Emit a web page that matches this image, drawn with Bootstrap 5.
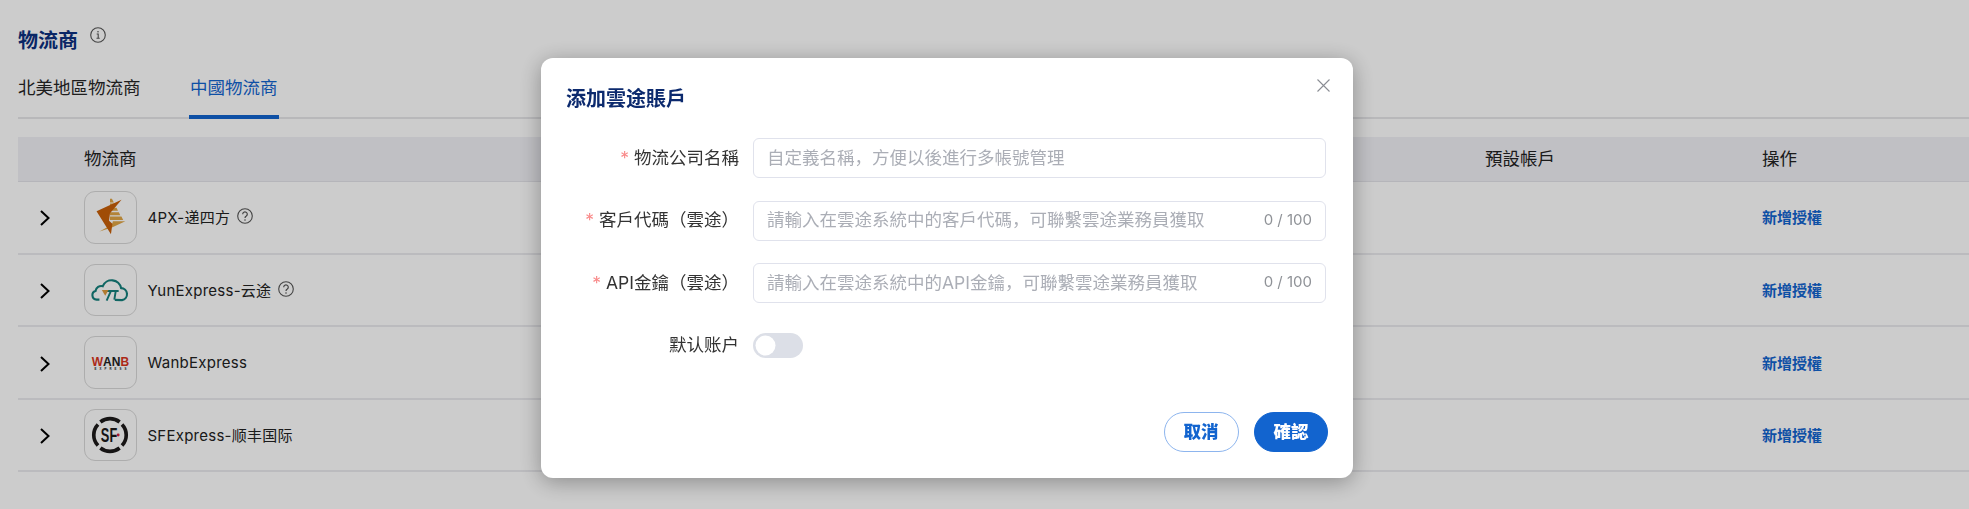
<!DOCTYPE html>
<html lang="zh-Hans">
<head>
<meta charset="utf-8">
<title>物流商</title>
<link href="https://cdn.jsdelivr.net/npm/bootstrap@5.3.0/dist/css/bootstrap.min.css" rel="stylesheet">
<style>
html,body{height:100%;overflow:hidden;background:#fff}
body{font-family:"Inter","Noto Sans CJK SC","Noto Sans CJK TC",sans-serif;font-size:17.5px;color:#222}
.page-wrap{padding:27px 0 0 18px}
.page-title{font-size:20px;font-weight:700;color:#0c3080;line-height:28px;margin:0}
.tab-strip{height:54px;margin-top:10px;border-bottom:2px solid #e6e6e9;gap:48.5px}
.tab-item{height:54px;line-height:46px;font-size:17.5px;color:#262626;text-decoration:none;padding:0;border-bottom:4px solid transparent}
.tab-item.on{color:#1264cf;border-bottom-color:#1264cf;padding:0 1px}
.carrier-table{table-layout:fixed;width:1951px;margin:18px 0 0;--bs-table-bg:transparent}
.carrier-table th{background:#f0f0f5;height:44.4px;padding:0;font-size:17.5px;font-weight:400;color:#222;border-bottom:1px solid #e3e3e9;vertical-align:middle}
.carrier-table td{height:72.5px;padding:0;border-bottom:2px solid #eaeaee;vertical-align:middle}
.chev-cell{padding-left:22px!important}
.logo-box{width:52.5px;height:52.5px;border:1px solid #d9d9d9;border-radius:11px;flex:none}
.carrier-name{font-size:15px;letter-spacing:.25px;color:#222;margin:2px 0 0 3px}
.act-link{display:inline-block;margin-top:2px;font-size:15px;font-weight:600;color:#1264cf;text-decoration:none}
.modal-backdrop{--bs-backdrop-opacity:.2}
.sheet{width:812px;max-width:none;margin:58px 0 0 541px}
.sheet .modal-content{height:420px;border:0;border-radius:12px;box-shadow:0 4px 22px rgba(0,0,0,.32)}
.sheet-head{padding:27px 23px 0 25px;height:80.25px}
.sheet-title{font-size:20px;font-weight:700;color:#0c2a6e;line-height:28px;margin:0}
.sheet-close{margin-top:-6px}
.sheet-body{padding:0 27px 0 0;gap:22.5px}
.field-row{min-height:40px;gap:14px}
.field-label{width:198px;flex:none;text-align:right;color:#333;font-size:17.5px;line-height:24px;padding-bottom:1px}
.req{color:#f98a8a;margin-right:5px;font-family:"Inter",sans-serif}
.field-input{height:40px;border:1.5px solid #e0e2ec;border-radius:6px;padding:0 80px 2px 13px;font-size:17.5px;color:#333}
.field-input::placeholder{color:#abaeb6}
.counter{position:absolute;right:14px;top:48%;transform:translateY(-50%);font-size:15px;color:#8f9297}
.switch-wrap{padding:0;margin:0;min-height:0;line-height:0}
.switch-wrap .form-check-input{width:50px;height:25px;margin:0;float:none;border:0;background-color:#dcdfe7;--bs-form-switch-bg:url("data:image/svg+xml,%3csvg xmlns='http://www.w3.org/2000/svg' viewBox='-4 -4 8 8'%3e%3ccircle r='3.2' fill='%23fff'/%3e%3c/svg%3e")}
.sheet-foot{padding:0 25px 26px 0;gap:15.5px}
.pill-btn{height:40px;padding:0;font-size:17.5px;font-weight:900;line-height:1;border-radius:20px}
.pill-ghost{width:75px;color:#1264cf;border:1px solid #8db5ee;background:#fff}
.pill-solid{width:74px;color:#fff;border:1px solid #1264cf;background:#1264cf}
</style>
</head>
<body>
<div class="page-wrap">
  <div class="d-flex align-items-start gap-2">
    <h1 class="page-title">物流商</h1>
    <svg class="ms-1" width="16" height="16" viewBox="0 0 16 16" fill="none" stroke="#555"><circle cx="8" cy="8" r="7.3" stroke-width="1.1"/><path d="M6.7 7h1.5v4M6.5 11.2h3.200" stroke-width="1.1"/><circle cx="8" cy="4.7" r=".8" fill="#555" stroke="none"/></svg>
  </div>
  <div class="d-flex tab-strip">
    <a class="tab-item" href="#">北美地區物流商</a>
    <a class="tab-item on" href="#">中國物流商</a>
  </div>
  <table class="table carrier-table">
    <colgroup><col style="width:66px"><col style="width:1401px"><col style="width:277px"><col></colgroup>
    <thead><tr><th></th><th>物流商</th><th>預設帳戶</th><th>操作</th></tr></thead>
    <tbody>
      <tr>
        <td class="chev-cell"><svg width="10" height="16" viewBox="0 0 10 16" fill="none" stroke="#000" stroke-width="2"><path d="M1 1l7.5 7L1 15"/></svg></td>
        <td><div class="d-flex align-items-center gap-2">
          <div class="logo-box"><svg width="50" height="50" viewBox="0 0 52 52"><g fill="#e0a545"><path d="M26 7h2l2 4h-4zM26 12h4.500l1.500 3h-6zM26 16.500h6.800l1.500 3H26zM26 21h9.200l1.500 3.200H26zM26 25.500h11.900l1.800 3.500H26z"/><path d="M29 30.500h13L28 37l-13 4 13-7z"/></g><path d="M38 8L12 20l15 24 1.500-11-3.500-3 1-8z" fill="#c85f08"/></svg></div>
          <span class="carrier-name">4PX-递四方</span>
          <svg width="16" height="16" viewBox="0 0 16 16" fill="none" stroke="#555" style="margin:-3px 0 0 -1px"><circle cx="8" cy="8" r="7.3" stroke-width="1.1"/><path d="M5.7 6.2A2.3 2.3 0 1 1 9.3 8.1c-.8.5-1.3 1-1.3 2" stroke-width="1.2"/><circle cx="8" cy="12" r=".8" fill="#555" stroke="none"/></svg>
        </div></td><td></td><td><a class="act-link" href="#">新增授權</a></td>
      </tr>
      <tr>
        <td class="chev-cell"><svg width="10" height="16" viewBox="0 0 10 16" fill="none" stroke="#000" stroke-width="2"><path d="M1 1l7.5 7L1 15"/></svg></td>
        <td><div class="d-flex align-items-center gap-2">
          <div class="logo-box"><svg width="50" height="50" viewBox="0 0 52 52" fill="none" stroke="#14807c" stroke-width="2.2"><path d="M15 36h-3a4.600 4.600 0 0 1-1-9 6 6 0 0 1 7.500-5 10 10 0 0 1 19 2 6.300 6.300 0 0 1 1 12.500l-7.500-.2"/><path d="M20 27h15M27 27l-4.500 10M32 27l-1.500 9" stroke-width="2"/><path d="M17.500 26h7l-3.500 6z" fill="#dc9a3c" stroke="none"/></svg></div>
          <span class="carrier-name">YunExpress-云途</span>
          <svg width="16" height="16" viewBox="0 0 16 16" fill="none" stroke="#555" style="margin:-3px 0 0 -1px"><circle cx="8" cy="8" r="7.3" stroke-width="1.1"/><path d="M5.7 6.2A2.3 2.3 0 1 1 9.3 8.1c-.8.5-1.3 1-1.3 2" stroke-width="1.2"/><circle cx="8" cy="12" r=".8" fill="#555" stroke="none"/></svg>
        </div></td><td></td><td><a class="act-link" href="#">新增授權</a></td>
      </tr>
      <tr>
        <td class="chev-cell"><svg width="10" height="16" viewBox="0 0 10 16" fill="none" stroke="#000" stroke-width="2"><path d="M1 1l7.5 7L1 15"/></svg></td>
        <td><div class="d-flex align-items-center gap-2">
          <div class="logo-box"><svg width="50" height="50" viewBox="0 0 52 52"><text x="7" y="30" font-family="Liberation Sans" font-weight="700" font-size="12.500" fill="#d8341c">W<tspan fill="#222">AN</tspan>B</text><text x="10" y="34.500" font-family="Liberation Sans" font-weight="700" font-size="3" textLength="33" fill="#222">EXPRESS</text></svg></div>
          <span class="carrier-name">WanbExpress</span>
        </div></td><td></td><td><a class="act-link" href="#">新增授權</a></td>
      </tr>
      <tr>
        <td class="chev-cell"><svg width="10" height="16" viewBox="0 0 10 16" fill="none" stroke="#000" stroke-width="2"><path d="M1 1l7.5 7L1 15"/></svg></td>
        <td><div class="d-flex align-items-center gap-2">
          <div class="logo-box"><svg width="50" height="50" viewBox="0 0 52 52"><g fill="none" stroke="#1c1a1a" stroke-width="3.800"><path d="M16 12.500a16 16 0 0 1 20 0"/><path d="M16 39.500a16 16 0 0 0 20 0"/><path d="M13.500 15a16 16 0 0 0 0 22"/><path d="M38.500 15a16 16 0 0 1 0 22"/></g><text x="16.500" y="33.500" font-family="Liberation Sans" font-weight="700" font-size="21" textLength="17" lengthAdjust="spacingAndGlyphs" fill="#1c1a1a">SF</text><circle cx="34.500" cy="26" r="1.500" fill="#d21f3c"/></svg></div>
          <span class="carrier-name">SFExpress-顺丰国际</span>
        </div></td><td></td><td><a class="act-link" href="#">新增授權</a></td>
      </tr>
    </tbody>
  </table>
</div>

<div class="modal-backdrop show"></div>
<div class="modal d-block" tabindex="-1">
  <div class="modal-dialog sheet">
    <div class="modal-content">
      <div class="d-flex justify-content-between align-items-start sheet-head">
        <h2 class="sheet-title">添加雲途賬戶</h2>
        <svg class="sheet-close" width="13" height="13" viewBox="0 0 13 13" stroke="#8a8d94" stroke-width="1.100"><path d="M.5.500l12 12M12.500.5l-12 12"/></svg>
      </div>
      <form class="d-flex flex-column sheet-body">
        <div class="d-flex align-items-center field-row">
          <label class="field-label"><span class="req">*</span>物流公司名稱</label>
          <div class="flex-grow-1 position-relative"><input class="form-control field-input" placeholder="自定義名稱，方便以後進行多帳號管理"></div>
        </div>
        <div class="d-flex align-items-center field-row">
          <label class="field-label"><span class="req">*</span>客戶代碼（雲途）</label>
          <div class="flex-grow-1 position-relative"><input class="form-control field-input" placeholder="請輸入在雲途系統中的客戶代碼，可聯繫雲途業務員獲取"><span class="counter">0 / 100</span></div>
        </div>
        <div class="d-flex align-items-center field-row">
          <label class="field-label"><span class="req">*</span>API金鑰（雲途）</label>
          <div class="flex-grow-1 position-relative"><input class="form-control field-input" placeholder="請輸入在雲途系統中的API金鑰，可聯繫雲途業務員獲取"><span class="counter">0 / 100</span></div>
        </div>
        <div class="d-flex align-items-center field-row">
          <label class="field-label">默认账户</label>
          <div class="form-check form-switch switch-wrap"><input class="form-check-input" type="checkbox" role="switch"></div>
        </div>
      </form>
      <div class="d-flex justify-content-end mt-auto sheet-foot">
        <button type="button" class="btn pill-btn pill-ghost">取消</button>
        <button type="button" class="btn pill-btn pill-solid">確認</button>
      </div>
    </div>
  </div>
</div>
<script src="https://cdn.jsdelivr.net/npm/bootstrap@5.3.0/dist/js/bootstrap.bundle.min.js"></script>
</body>
</html>
